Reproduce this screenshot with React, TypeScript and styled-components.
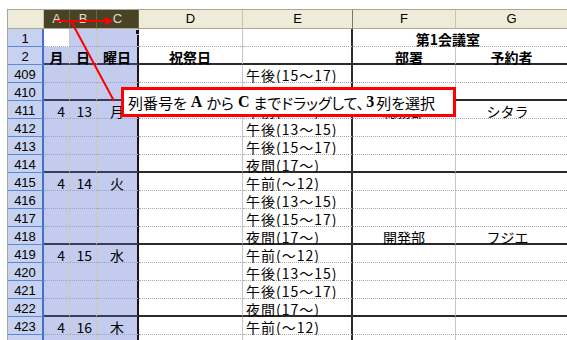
import React from 'react';
import styled, { createGlobalStyle } from 'styled-components';

const Global = createGlobalStyle`
  html, body { margin: 0; padding: 0; background: #fff; overflow: hidden; }
`;

const COLS = '36px 26px 27px 42px 104px 110px 103px 111px';

type Line = 'dot' | 'thick';
type Edge = 'tan' | 'sel' | 'light' | 'dark' | 'none';
type Align = 'left' | 'center' | 'right';

const edgeBorder: Record<Edge, string> = {
  tan: '1px solid #d2c9b4',
  sel: '2px solid #161616',
  light: '1px solid #c6c6c6',
  dark: '2px solid #2c2c2c',
  none: 'none',
};

const Page = styled.div`
  position: relative;
  width: 567px;
  height: 340px;
  overflow: hidden;
  padding: 9px 0 0 7px;
  box-sizing: border-box;
  background: #fff;
  font-family: "Noto Sans CJK JP", sans-serif;
`;

const Sheet = styled.div`
  display: flex;
  flex-direction: column;
  border-top: 1px solid #a8a694;
  border-left: 1px solid #a8a694;
`;

const HeadRow = styled.div`
  display: grid;
  grid-template-columns: ${COLS};
  grid-template-rows: 19px;
  flex: none;
`;

const ColHead = styled.div<{ $sel?: boolean; $edge?: string }>`
  box-sizing: border-box;
  height: 19px;
  border-bottom: 1px solid #aca894;
  border-right: ${p => p.$edge ?? `1px solid ${p.$sel ? '#6c6442' : '#c8c4ae'}`};
  background: ${p => (p.$sel ? '#4a4224' : '#eeecd8')};
  color: ${p => (p.$sel ? '#dedcd4' : '#000')};
  font: 13px/18px "Liberation Sans", Arial, sans-serif;
  text-align: center;
`;

const Row = styled.div`
  display: grid;
  grid-template-columns: ${COLS};
  grid-template-rows: 18px;
  flex: none;
`;

const RowHead = styled.div`
  box-sizing: border-box;
  height: 18px;
  background: #c6d2f0;
  border-right: 2px solid #4470cc;
  border-bottom: 1px solid #5c88da;
  font: 13px/16px "Liberation Sans", Arial, sans-serif;
  padding-top: 2px;
  text-align: center;
  color: #000;
`;

const Cell = styled.div<{
  $sel?: boolean;
  $active?: boolean;
  $line: Line;
  $edge: Edge;
  $align?: Align;
  $bold?: boolean;
  $span?: number;
  $padR?: number;
  $padL?: number;
  $handle?: boolean;
}>`
  position: relative;
  box-sizing: border-box;
  height: 18px;
  grid-column: span ${p => p.$span ?? 1};
  background: ${p => (p.$active ? '#fff' : p.$sel ? '#c3ccee' : '#fff')};
  border-right: ${p => (p.$handle ? 'none' : edgeBorder[p.$edge])};
  border-bottom: ${p =>
    p.$line === 'thick'
      ? `2px solid ${p.$sel ? '#3a3c5a' : '#2a2a2a'}`
      : `1px dotted ${p.$sel ? '#9ca2c2' : '#a8a8a8'}`};
  text-align: ${p => p.$align ?? 'left'};
  font-size: 14px;
  font-weight: ${p => (p.$bold ? 700 : 400)};
  line-height: 14px;
  letter-spacing: ${p => (p.$align === 'left' ? '1px' : '0')};
  padding: 3px ${p => p.$padR ?? 4}px 0 ${p => p.$padL ?? 3}px;
  white-space: nowrap;
  color: #000;
  &::before {
    content: ${p => (p.$handle ? "''" : 'none')};
    position: absolute;
    right: 0;
    top: 6px;
    bottom: 0;
    width: 2px;
    background: #161616;
  }
  &::after {
    content: ${p => (p.$handle ? "''" : 'none')};
    position: absolute;
    right: -1px;
    top: 1px;
    width: 4px;
    height: 4px;
    background: #161616;
  }
`;

const Callout = styled.div`
  position: absolute;
  left: 121px;
  top: 87px;
  width: 335px;
  height: 30px;
  box-sizing: border-box;
  border: 3px solid #ff0000;
  background: #fff;
  display: flex;
  align-items: center;
  padding-left: 4px;
  font-family: "Noto Sans CJK JP", sans-serif;
  font-size: 15px;
  font-feature-settings: "palt";
  white-space: nowrap;
  color: #000;
`;

const Latin = styled.span<{ $narrow?: boolean }>`
  font-family: "Liberation Serif", "Times New Roman", serif;
  font-weight: 700;
  font-size: 16px;
  margin: 0 ${p => (p.$narrow ? 2 : 4)}px;
`;

const Arrows = styled.svg`
  position: absolute;
  left: 0;
  top: 0;
  pointer-events: none;
`;

type RowData = {
  n: string;
  line: Line;
  a?: string;
  b?: string;
  c?: string;
  d?: string;
  e?: string;
  f?: string;
  g?: string;
  bold?: boolean;
  merged?: string;
  first?: boolean;
};

const rows: RowData[] = [
  { n: '1', line: 'dot', merged: '第1会議室', first: true },
  { n: '2', line: 'thick', a: '月', b: '日', c: '曜日', d: '祝祭日', f: '部署', g: '予約者', bold: true },
  { n: '409', line: 'dot', e: '午後(15〜17)' },
  { n: '410', line: 'thick', e: '夜間(17〜)' },
  { n: '411', line: 'dot', a: '4', b: '13', c: '月', e: '午前(〜12)', f: '総務部', g: 'シタラ' },
  { n: '412', line: 'dot', e: '午後(13〜15)' },
  { n: '413', line: 'dot', e: '午後(15〜17)' },
  { n: '414', line: 'thick', e: '夜間(17〜)' },
  { n: '415', line: 'dot', a: '4', b: '14', c: '火', e: '午前(〜12)' },
  { n: '416', line: 'dot', e: '午後(13〜15)' },
  { n: '417', line: 'dot', e: '午後(15〜17)' },
  { n: '418', line: 'thick', e: '夜間(17〜)', f: '開発部', g: 'フジエ' },
  { n: '419', line: 'dot', a: '4', b: '15', c: '水', e: '午前(〜12)' },
  { n: '420', line: 'dot', e: '午後(13〜15)' },
  { n: '421', line: 'dot', e: '午後(15〜17)' },
  { n: '422', line: 'thick', e: '夜間(17〜)' },
  { n: '423', line: 'dot', a: '4', b: '16', c: '木', e: '午前(〜12)' },
  { n: '', line: 'dot' },
];

const heads = [
  { label: '', sel: false },
  { label: 'A', sel: true },
  { label: 'B', sel: true },
  { label: 'C', sel: true },
  { label: 'D', sel: false },
  { label: 'E', sel: false, edge: '1px solid #7a7868' },
  { label: 'F', sel: false },
  { label: 'G', sel: false, edge: 'none' },
];

function SheetRow({ r }: { r: RowData }) {
  const num = !r.bold;
  return (
    <Row>
      <RowHead>{r.n}</RowHead>
      <Cell $sel $active={r.first} $line={r.line} $edge="tan" $align={num ? 'right' : 'center'} $bold={r.bold} $padR={num ? 4 : 0} $padL={0}>
        {r.a}
      </Cell>
      <Cell $sel $line={r.line} $edge="tan" $align={num ? 'right' : 'center'} $bold={r.bold} $padR={num ? 4 : 0} $padL={0}>
        {r.b}
      </Cell>
      <Cell $sel $line={r.line} $edge="sel" $align="center" $bold={r.bold} $padR={0} $padL={0} $handle={r.first}>
        {r.c}
      </Cell>
      <Cell $line={r.line} $edge="light" $align="center" $bold={r.bold}>
        {r.d}
      </Cell>
      <Cell $line={r.line} $edge="dark" $align="left">
        {r.e}
      </Cell>
      {r.merged ? (
        <Cell $line={r.line} $edge="none" $align="center" $bold $span={2} $padR={24} $padL={0}>
          {r.merged}
        </Cell>
      ) : (
        <>
          <Cell $line={r.line} $edge="light" $align="center" $bold={r.bold} $padL={r.bold ? 10 : 0} $padR={0}>
            {r.f}
          </Cell>
          <Cell $line={r.line} $edge="none" $align="center" $bold={r.bold} $padL={0} $padR={r.bold ? 0 : 8}>
            {r.g}
          </Cell>
        </>
      )}
    </Row>
  );
}

export default function App() {
  return (
    <>
      <Global />
      <Page>
        <Sheet>
          <HeadRow>
            {heads.map((h, i) => (
              <ColHead key={i} $sel={h.sel} $edge={h.edge}>
                {h.label}
              </ColHead>
            ))}
          </HeadRow>
          {rows.map((r, i) => (
            <SheetRow key={i} r={r} />
          ))}
        </Sheet>
        <Callout>
          列番号を<Latin>A</Latin>から<Latin>C</Latin>までドラッグして、<Latin $narrow>3</Latin>列を選択
        </Callout>
        <Arrows width="567" height="340" viewBox="0 0 567 340">
          <line x1="56" y1="21" x2="107" y2="21" stroke="#ff0000" strokeWidth="2" />
          <polygon points="105,17 113,21 105,25" fill="#ff0000" />
          <line x1="71" y1="21" x2="114" y2="101" stroke="#ff0000" strokeWidth="2" />
        </Arrows>
      </Page>
    </>
  );
}
